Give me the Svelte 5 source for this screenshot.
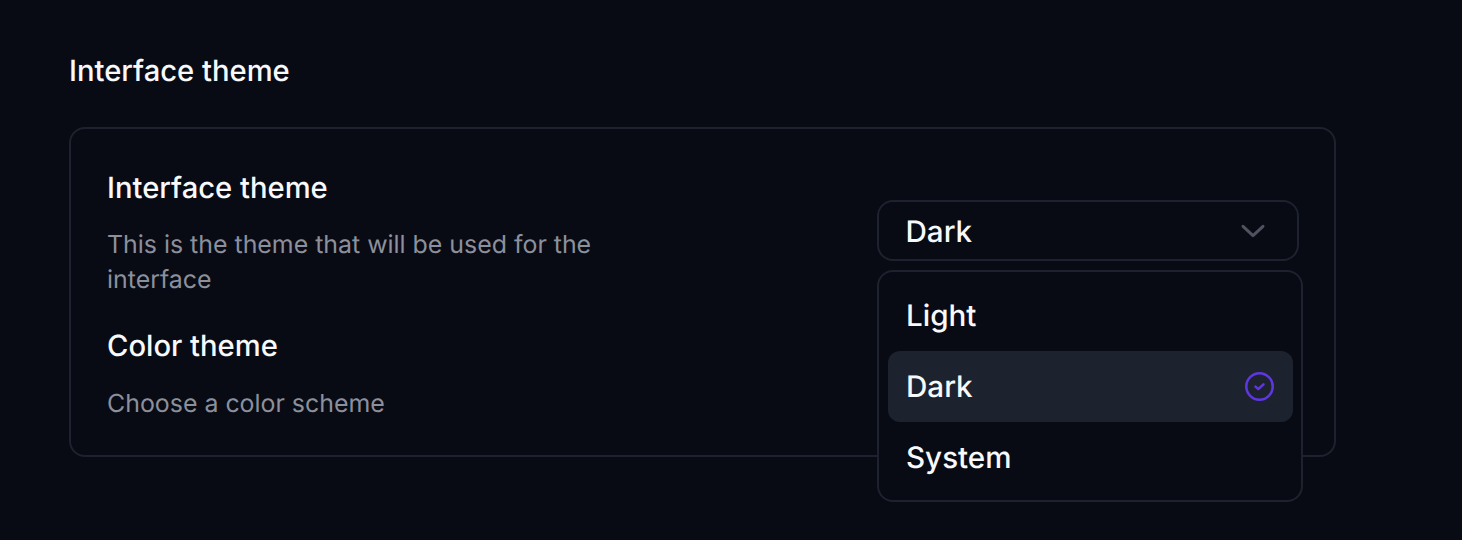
<script>
  const options = ['Light', 'Dark', 'System'];
  let selected = 'Dark';
</script>

<main class="page">
  <h2 class="heading">Interface theme</h2>
  <section class="card">
    <div class="info">
      <h3 class="label">Interface theme</h3>
      <p class="desc two">This is the theme that will be used for the interface</p>
      <h3 class="label second">Color theme</h3>
      <p class="desc last">Choose a color scheme</p>
    </div>
    <div class="control">
      <div class="trigger">
        <span>{selected}</span>
        <svg class="chev" viewBox="0 0 24 24" width="32" height="32" fill="none" stroke="#4f535f" stroke-width="2.2" stroke-linecap="round" stroke-linejoin="round"><path d="M4.5 8.5 12 15.5 19.5 8.5"/></svg>
      </div>
      <div class="menu">
        {#each options as o}
          <div class="item" class:active={o === selected}>
            <span>{o}</span>
            {#if o === selected}
              <svg viewBox="0 0 29 29" width="29" height="29" fill="none" stroke="#5f37e0" stroke-linecap="round" stroke-linejoin="round"><circle cx="14.5" cy="14.5" r="13.2" stroke-width="2.5"/><path d="M10.5 14.6 13.3 17 18.5 12.4" stroke-width="2.5"/></svg>
            {/if}
          </div>
        {/each}
      </div>
    </div>
  </section>
</main>

<style>
  :global(body) {
    margin: 0;
    background: #080b14;
    font-family: Inter, "Noto Sans", sans-serif;
    color: #fff;
    text-rendering: geometricPrecision;
  }
  .page {
    height: 540px;
    box-sizing: border-box;
    padding: 52px 126px 0 69px;
    overflow: hidden;
  }
  .heading, .label {
    margin: 0;
    font-size: 29.2px;
    font-weight: 450;
    line-height: 39px;
    color: #f8f9fb;
  }
  .heading {
    margin-bottom: 36px;
  }
  .card {
    box-sizing: border-box;
    height: 330px;
    border: 2px solid #1e222e;
    border-radius: 16px;
    padding: 40px 35px 0 36px;
    display: flex;
    justify-content: space-between;
  }
  .info {
    width: 510px;
  }
  .desc {
    margin: 20px 0 0;
    font-size: 24.9px;
    line-height: 35px;
    color: #8c909c;
  }
  .desc.last {
    margin-top: 21px;
  }
  .label.second {
    margin-top: 29px;
  }
  .control {
    position: relative;
    width: 422px;
    margin-top: 31px;
  }
  .trigger {
    box-sizing: border-box;
    height: 61px;
    border: 2px solid #1e222e;
    border-radius: 16px;
    padding: 2px 28px 0 26.5px;
    display: flex;
    align-items: center;
    justify-content: space-between;
    font-size: 29.6px;
    font-weight: 450;
    color: #f8f9fb;
  }
  .chev {
    margin-top: -2px;
  }
  .menu {
    position: absolute;
    top: 70px;
    left: 0;
    width: 426px;
    height: 232px;
    box-sizing: border-box;
    background: #080b14;
    border: 2px solid #1e222e;
    border-radius: 16px;
    padding: 9px 8px 8px 9px;
    display: flex;
    flex-direction: column;
  }
  .item {
    height: 71px;
    flex: none;
    box-sizing: border-box;
    border-radius: 12px;
    padding: 0 19px 0 18px;
    display: flex;
    align-items: center;
    justify-content: space-between;
    font-size: 29.6px;
    font-weight: 450;
    color: #f8f9fb;
  }
  .item:first-child {
    height: 70px;
  }
  .item.active {
    background: #1d232e;
  }
</style>
